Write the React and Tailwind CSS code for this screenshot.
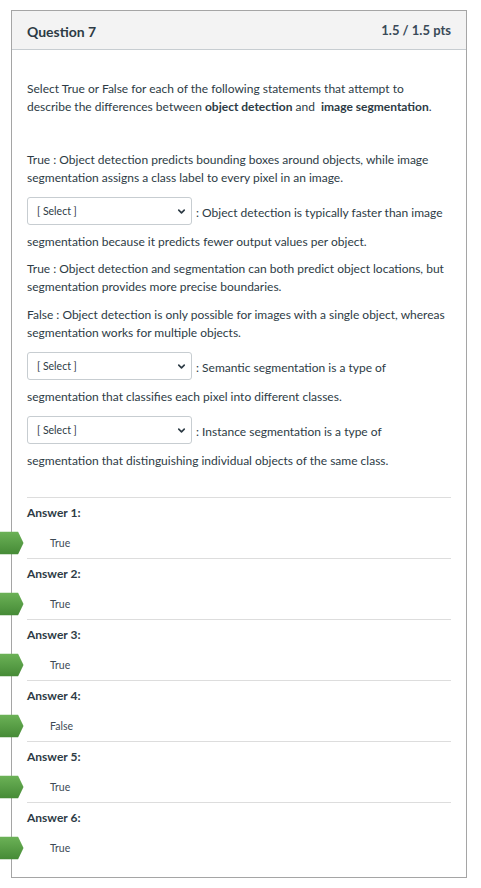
import { ChevronDown } from "lucide-react"

const answers = ["True", "True", "True", "False", "True", "True"]

function SelectBox() {
  return (
    <div className="relative w-[165px] h-[28px] shrink-0">
      <select className="appearance-none w-full h-full pl-[9px] pr-6 bg-white border border-[#c7cdd1] rounded-[3px] text-[10.5px] text-[#2d3b45] outline-none">
        <option>[ Select ]</option>
        <option>True</option>
        <option>False</option>
      </select>
      <div className="absolute inset-y-0 right-[5px] flex items-center pointer-events-none">
        <ChevronDown className="w-[11px] h-[11px] text-[#2d3b45]" strokeWidth={3.5} />
      </div>
    </div>
  )
}

function SelectStatement({ first, rest }) {
  return (
    <div>
      <div className="flex items-center h-[28px]">
        <SelectBox />
        <span className="ml-[4px] pt-[3px]">: {first}</span>
      </div>
      <p className="mt-[8px]">{rest}</p>
    </div>
  )
}

function GreenArrow() {
  return (
    <svg width="24" height="23" viewBox="0 0 24 23" className="absolute left-[-27px] top-1/2 -translate-y-1/2">
      <defs>
        <linearGradient id="ga" x1="0" y1="0" x2="0" y2="1">
          <stop offset="0" stopColor="#6cb257" />
          <stop offset="1" stopColor="#458a36" />
        </linearGradient>
      </defs>
      <polygon points="0,0 18,0 23.5,11.5 18,23 0,23" fill="url(#ga)" />
    </svg>
  )
}

export default function App() {
  return (
    <div className="min-h-[888px] bg-white pt-[10px] pl-[11px] font-['Lato','Liberation_Sans',sans-serif] text-[#2d3b45]">
      <div className="w-[456px] border border-[#a5a5a5]">
        {/* Header */}
        <div className="flex justify-between items-start h-[39px] bg-[#f3f3f3] border-b border-[#c7cdd1] px-[15px]">
          <h2 className="text-[14px] font-bold leading-[18px] pt-[12px]">Question 7</h2>
          <span className="text-[13px] font-bold leading-[16px] pt-[11px] text-[#394a58]">1.5 / 1.5 pts</span>
        </div>

        {/* Body */}
        <div className="px-[15px] pt-[30px] pb-[20px] text-[12px] leading-[18px]">
          <p className="mb-[35px]">
            Select True or False for each of the following statements that attempt to describe the differences between <strong>object detection</strong> and <strong className="ml-[3px]">image segmentation</strong>.
          </p>

          <p className="mb-[10px]">
            True : Object detection predicts bounding boxes around objects, while image segmentation assigns a class label to every pixel in an image.
          </p>

          <SelectStatement
            first="Object detection is typically faster than image"
            rest="segmentation because it predicts fewer output values per object."
          />

          <p className="mt-[9px] mb-[10px]">
            True : Object detection and segmentation can both predict object locations, but segmentation provides more precise boundaries.
          </p>

          <p className="mb-[10px]">
            False : Object detection is only possible for images with a single object, whereas segmentation works for multiple objects.
          </p>

          <SelectStatement
            first="Semantic segmentation is a type of"
            rest="segmentation that classifies each pixel into different classes."
          />

          <div className="mt-[10px]">
            <SelectStatement
              first="Instance segmentation is a type of"
              rest="segmentation that distinguishing individual objects of the same class."
            />
          </div>

          {/* Answers */}
          <div className="mt-[27px]">
            {answers.map((a, i) => (
              <div key={i} className="border-t border-[#dddddd] pt-[6px] pb-[6px] last:pb-0">
                <div className="font-bold">Answer {i + 1}:</div>
                <div className="relative mt-[12px] pl-[23px] text-[10.5px] text-[#3d4a55]">
                  <GreenArrow />
                  {a}
                </div>
              </div>
            ))}
          </div>
        </div>
      </div>
    </div>
  )
}
